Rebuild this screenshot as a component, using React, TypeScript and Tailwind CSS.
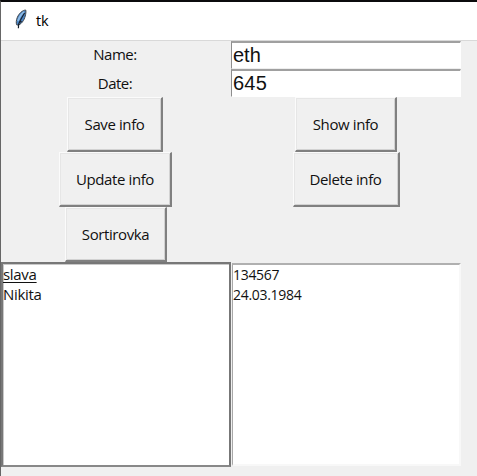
import type { ReactNode } from "react";

function TkButton({ children, className }: { children: ReactNode; className: string }) {
  return (
    <button
      className={`flex h-[55px] shrink-0 items-center justify-center border-t border-l border-r-2 border-b-2 border-t-[#fbfbfb] border-l-[#fbfbfb] border-r-[#808080] border-b-[#808080] bg-[#f0f0f0] pb-px shadow-[inset_1px_1px_0_#e6e6e6,inset_-1px_-1px_0_#d2d2d2] ${className}`}
    >
      {children}
    </button>
  );
}

function Feather() {
  return (
    <svg width="12" height="21" viewBox="0 0 12 21" className="block">
      <path d="M10.7 1C7.5 1.2 4 4.5 2.4 8.2C1.2 11 .9 14 1.7 15.8L3.4 16.2C7.9 14 9.8 9.5 10.6 5.5C11 3.5 11 2 10.7 1Z" fill="#4c86c6" stroke="#3f4449" strokeWidth="1" />
      <path d="M9 3C6.4 4.8 4.4 8 3 12" stroke="#8ebbe6" strokeWidth="1.8" fill="none" />
      <path d="M9.6 4C7.4 7.8 4.8 11.5 3.6 15.5L3.4 19.2M4 13.8L6.6 12.2" stroke="#17202c" strokeWidth="1.2" fill="none" />
    </svg>
  );
}

export default function App() {
  return (
    <div className="h-[476px] w-[477px] overflow-hidden border-t-2 border-l border-t-[#0b0b0d] border-l-[#666] bg-[#f0f0f0] font-['Open_Sans','Noto_Sans',sans-serif] text-[15px] leading-5 tracking-[-0.4px] text-[#111]">
      <header className="flex h-[39px] items-start border-b border-[#d9d9d9] bg-white pl-[14px]">
        <div className="pt-[7px]"><Feather /></div>
        <span className="pt-[9px] pl-[9px] text-[14.5px] tracking-[-0.2px] text-black">tk</span>
      </header>
      <main className="grid w-[460px] grid-cols-[230px_230px]">
        <label className="flex h-7 items-center justify-center pr-0.5 pb-0.5 tracking-[-0.5px]">Name:</label>
        <input
          defaultValue="eth"
          className="block h-7 w-full border-t-2 border-r border-b border-l border-t-[#a0a0a0] border-r-white border-b-[#eee] border-l-[#8d8d8d] bg-white pl-px font-['Liberation_Sans',Arial,sans-serif] text-[20px] leading-6 tracking-[0px] outline-none"
        />
        <label className="flex h-7 items-center justify-center pr-0.5 pb-px tracking-[-0.5px]">Date:</label>
        <input
          defaultValue="645"
          className="block h-7 w-full border-t-2 border-r border-b border-l border-t-[#a0a0a0] border-r-white border-b-white border-l-[#8d8d8d] bg-white pl-px font-['Liberation_Sans',Arial,sans-serif] text-[20px] leading-6 tracking-[0.2px] outline-none"
        />
        <div className="flex justify-center pr-0.5"><TkButton className="w-[96px]">Save info</TkButton></div>
        <div className="flex justify-center"><TkButton className="w-[102px]">Show info</TkButton></div>
        <div className="flex justify-center pr-px"><TkButton className="w-[113px]">Update info</TkButton></div>
        <div className="flex justify-center"><TkButton className="w-[107px]">Delete info</TkButton></div>
        <div className="flex justify-center"><TkButton className="w-[102px]">Sortirovka</TkButton></div>
        <div />
        <ul className="h-[205px] border-2 border-t-[#777] border-r-[#777] border-b-[#888] border-l-[#777] bg-white tracking-[-0.3px] shadow-[inset_1px_1px_0_#c9c9c9]">
          <li className="h-5 underline decoration-1 underline-offset-2">slava</li>
          <li className="h-5">Nikita</li>
        </ul>
        <ul className="mt-px mb-px ml-px h-[203px] border-t-2 border-r-2 border-b-2 border-l border-t-[#b0b0b0] border-r-[#f8f8f8] border-b-[#f8f8f8] border-l-[#a8a8a8] bg-white text-[14px] tracking-[-0.3px]">
          <li className="h-5 leading-[19px]">134567</li>
          <li className="h-5 leading-[19px]">24.03.1984</li>
        </ul>
      </main>
    </div>
  );
}
